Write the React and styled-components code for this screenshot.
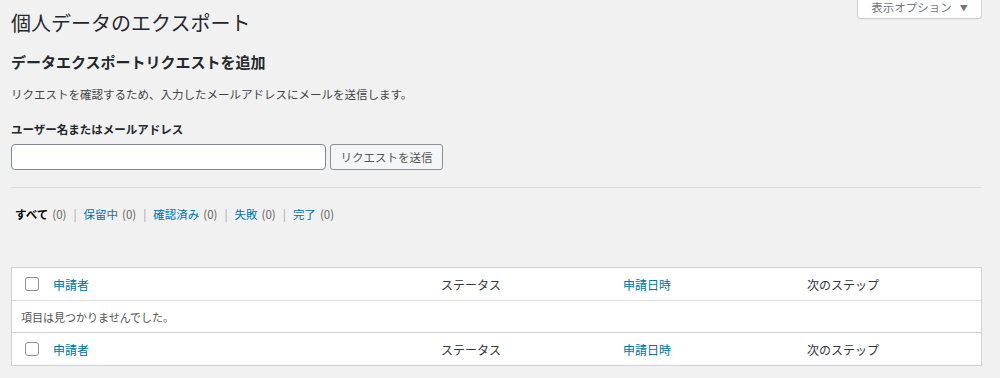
import React from "react";
import styled, { createGlobalStyle } from "styled-components";

const GlobalStyle = createGlobalStyle`
  html, body {
    margin: 0;
    padding: 0;
    background: #f1f1f1;
  }
  body {
    font-family: "Noto Sans CJK JP", "Noto Sans", "Liberation Sans", sans-serif;
    color: #23282d;
    font-size: 11.5px;
  }
`;

const Page = styled.div`
  padding: 0 18px 0 11px;
`;

const Header = styled.div`
  display: flex;
  justify-content: space-between;
  align-items: flex-start;
`;

const Title = styled.h1`
  margin: 10px 0 0;
  font-size: 20px;
  line-height: 26px;
  font-weight: 400;
  color: #23282d;
`;

const ScreenOptions = styled.button`
  margin-top: -1px;
  width: 125px;
  height: 20px;
  display: flex;
  align-items: center;
  justify-content: center;
  gap: 8px;
  background: #fff;
  border: 1px solid #ccd0d4;
  border-top: none;
  border-radius: 0 0 4px 4px;
  box-shadow: 0 1px 1px rgba(0, 0, 0, 0.04);
  font-family: inherit;
  font-size: 11.5px;
  color: #72777c;
  padding: 0 0 3px;
`;

const Caret = styled.span`
  font-size: 8px;
  color: #72777c;
`;

const SubTitle = styled.h2`
  margin: 16px 0 0;
  font-size: 15px;
  line-height: 20px;
  font-weight: 700;
  color: #23282d;
`;

const Text = styled.p`
  margin: 13px 0 0;
  font-size: 11.5px;
  line-height: 18px;
  color: #444;
`;

const Label = styled.label`
  display: block;
  margin-top: 17px;
  font-size: 11.5px;
  line-height: 18px;
  font-weight: 700;
  color: #23282d;
`;

const FormRow = styled.div`
  display: flex;
  gap: 4px;
  margin-top: 6px;
`;

const Input = styled.input`
  box-sizing: border-box;
  width: 315px;
  height: 26px;
  border: 1px solid #7e8993;
  border-radius: 4px;
  background: #fff;
  margin: 0;
`;

const Button = styled.button`
  box-sizing: border-box;
  width: 113px;
  height: 26px;
  border: 1px solid #8c8f94;
  border-radius: 3px;
  background: #f3f5f6;
  color: #555;
  font-family: inherit;
  font-size: 11.5px;
  padding: 0;
`;

const Divider = styled.hr`
  margin: 17px 0 0;
  border: none;
  border-top: 1px solid #dcdcde;
`;

const Filters = styled.ul`
  display: flex;
  list-style: none;
  margin: 17px 0 0;
  padding: 0 0 0 4px;
  font-size: 11.5px;
  line-height: 18px;
  color: #666;
`;

const FilterItem = styled.li`
  white-space: pre;
`;

const FilterLink = styled.a`
  color: ${(p) => (p.current ? "#000" : "#0073aa")};
  font-weight: ${(p) => (p.current ? 700 : 400)};
  text-decoration: none;
`;

const Count = styled.span`
  margin-left: 4px;
`;

const Sep = styled.span`
  color: #a0a5aa;
  margin: 0 7px;
`;

const Table = styled.div`
  margin-top: 44px;
  background: #fff;
  border: 1px solid #ccd0d4;
  box-shadow: 0 1px 1px rgba(0, 0, 0, 0.04);
`;

const HeadRow = styled.div`
  display: grid;
  grid-template-columns: 33px 388px 182px 184px 1fr;
  align-items: center;
  height: 32px;
  border-top: ${(p) => (p.foot ? "1px solid #ccd0d4" : "none")};
  border-bottom: ${(p) => (p.foot ? "none" : "1px solid #dcdcde")};
  font-size: 12px;
`;

const CheckCell = styled.div`
  display: flex;
  justify-content: flex-end;
`;

const Checkbox = styled.span`
  box-sizing: border-box;
  width: 14px;
  height: 14px;
  border: 1px solid #8c8f94;
  border-radius: 3px;
  background: #fff;
  margin-right: 6px;
`;

const HeadCell = styled.div`
  padding-left: 8px;
  color: ${(p) => (p.link ? "#0073aa" : "#32373c")};
`;

const EmptyRow = styled.div`
  height: 31px;
  display: flex;
  align-items: center;
  padding-left: 9px;
  color: #555;
  font-size: 11px;
`;

const columns = [
  { label: "申請者", link: true },
  { label: "ステータス" },
  { label: "申請日時", link: true },
  { label: "次のステップ" },
];

const filters = [
  { label: "すべて", current: true },
  { label: "保留中" },
  { label: "確認済み" },
  { label: "失敗" },
  { label: "完了" },
];

const Row = ({ foot }) => (
  <HeadRow foot={foot}>
    <CheckCell>
      <Checkbox />
    </CheckCell>
    {columns.map((c) => (
      <HeadCell key={c.label} link={c.link}>
        {c.label}
      </HeadCell>
    ))}
  </HeadRow>
);

export default function App() {
  return (
    <Page>
      <GlobalStyle />
      <Header>
        <Title>個人データのエクスポート</Title>
        <ScreenOptions>
          表示オプション <Caret>▼</Caret>
        </ScreenOptions>
      </Header>
      <SubTitle>データエクスポートリクエストを追加</SubTitle>
      <Text>リクエストを確認するため、入力したメールアドレスにメールを送信します。</Text>
      <Label>ユーザー名またはメールアドレス</Label>
      <FormRow>
        <Input type="text" />
        <Button>リクエストを送信</Button>
      </FormRow>
      <Divider />
      <Filters>
        {filters.map((f, i) => (
          <FilterItem key={f.label}>
            <FilterLink current={f.current}>{f.label}</FilterLink>
            <Count>(0)</Count>
            {i < filters.length - 1 && <Sep>|</Sep>}
          </FilterItem>
        ))}
      </Filters>
      <Table>
        <Row />
        <EmptyRow>項目は見つかりませんでした。</EmptyRow>
        <Row foot />
      </Table>
    </Page>
  );
}
